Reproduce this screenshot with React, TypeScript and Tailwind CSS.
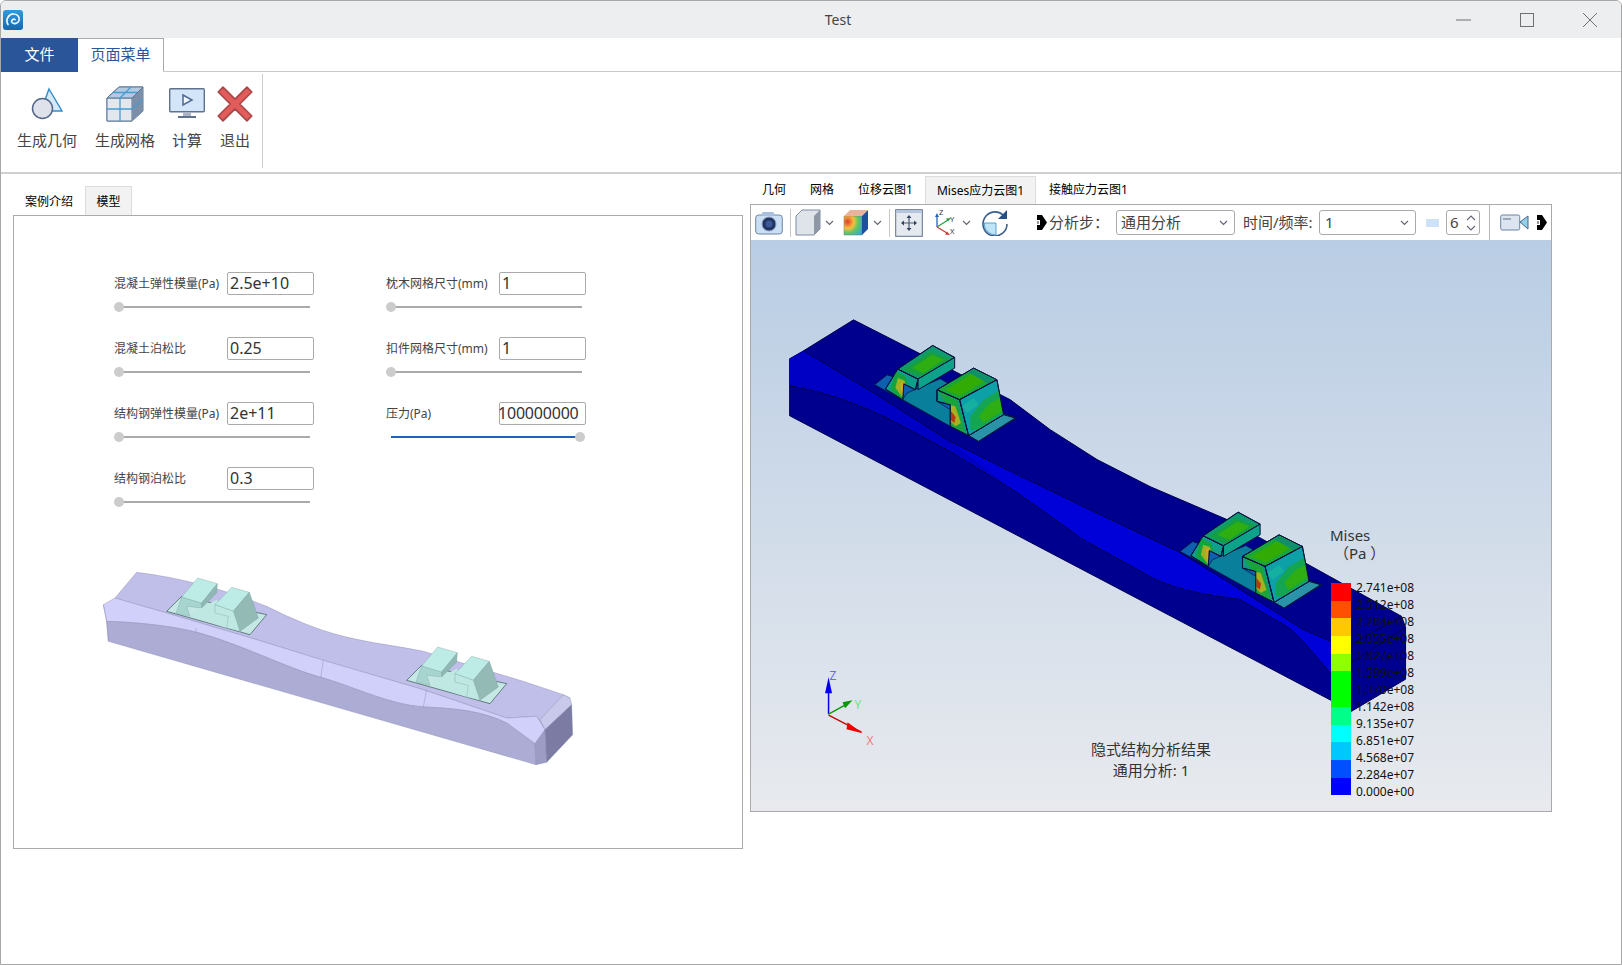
import React from "react";

const F = "font-['Noto_Sans','Noto_Sans_CJK_SC',sans-serif]";

function Logo() {
  return (
    <svg width="20" height="20" viewBox="0 0 20 20">
      <defs>
        <linearGradient id="lg" x1="0" y1="0" x2="0" y2="1">
          <stop offset="0" stopColor="#2f9be0" />
          <stop offset="1" stopColor="#1467ad" />
        </linearGradient>
      </defs>
      <rect width="20" height="20" rx="3" fill="url(#lg)" />
      <path d="M5 14.500c-3-5 1-11 6-10.500 4 .3 6 3.500 5 6.500-1 3-5 4-7 2-1.300-2 1-4 3-3" fill="none" stroke="#e8f6ff" strokeWidth="1.700" strokeLinecap="round" />
    </svg>
  );
}

function WinControls() {
  return (
    <div className="flex items-center">
      <svg width="16" height="16" viewBox="0 0 16 16" className="mr-[47px]"><path d="M0 8h15" stroke="#707070" strokeWidth="1" /></svg>
      <svg width="16" height="16" viewBox="0 0 16 16" className="mr-[47px]"><rect x="1.500" y="1.500" width="13" height="13" fill="none" stroke="#707070" /></svg>
      <svg width="16" height="16" viewBox="0 0 16 16"><path d="M1 1l14 14M15 1L1 15" stroke="#707070" strokeWidth="1" /></svg>
    </div>
  );
}

function GeoIcon() {
  return (
    <svg width="36" height="36" viewBox="0 0 36 36">
      <path d="M20 3L33 25H12z" fill="#d6e9f6" stroke="#2f8ccb" strokeWidth="1.400" />
      <circle cx="13.500" cy="22.500" r="10" fill="#dfe2ea" stroke="#56688a" strokeWidth="1.500" />
    </svg>
  );
}
function MeshIcon() {
  return (
    <svg width="38" height="38" viewBox="0 0 38 38">
      <path d="M1 13L13 2h24v24L26 36H1z" fill="#c9d8e6" stroke="#5b7696" strokeWidth="1" />
      <path d="M1 13h25v23H1z" fill="#e3e8ee" stroke="#5b7696" />
      <path d="M26 13L37 2v24L26 36z" fill="#7c8fa8" />
      <path d="M1 13L13 2h24L26 13z" fill="#b2cbe2" stroke="#5b7696" />
      <path d="M14 13v23M1 24h25M14 13L25 2M7 7.500h24M26 24L37 14" stroke="#4a9ad0" strokeWidth="1.300" fill="none" />
    </svg>
  );
}
function RunIcon() {
  return (
    <svg width="36" height="32" viewBox="0 0 36 32">
      <rect x="0.700" y="0.700" width="34.600" height="23" rx="1" fill="#d3e5f8" stroke="#60718e" strokeWidth="1.400" />
      <rect x="14" y="24" width="8" height="4" fill="#aab4c4" />
      <rect x="9" y="28" width="18" height="2" fill="#60718e" />
      <path d="M14 7l9 5-9 5z" fill="#eef5fc" stroke="#4d6a92" strokeWidth="1.500" />
    </svg>
  );
}
function ExitIcon() {
  return (
    <svg width="36" height="36" viewBox="3 3 30 30">
      <path d="M4 8L8 4l10 10L28 4l4 4-10 10 10 10-4 4-10-10L8 32l-4-4 10-10z" fill="#e25c5c" stroke="#a94848" strokeWidth="1.400" strokeLinejoin="round" />
    </svg>
  );
}

function RibbonButton({ icon, label, w }: { icon: React.ReactNode; label: string; w: string }) {
  return (
    <div className={`flex flex-col items-center shrink-0 ${w}`}>
      <div className="h-[44px] flex items-center justify-center">{icon}</div>
      <div className="text-[15px] leading-[20px] mt-[4px] text-[#444] whitespace-nowrap">{label}</div>
    </div>
  );
}

function Chevron({ cls = "" }: { cls?: string }) {
  return <svg width="9" height="6" viewBox="0 0 9 6" className={cls}><path d="M1 1l3.500 3.500L8 1" fill="none" stroke="#667" strokeWidth="1.200" /></svg>;
}
function Sep({ cls = "" }: { cls?: string }) {
  return <div className={`w-px h-[28px] bg-[#c8c8c8] shrink-0 ${cls}`} />;
}
function Broken({ id }: { id: string }) {
  return (
    <svg width="11" height="15" viewBox="0 0 11 15" className="shrink-0">
      <defs><filter id={id} x="-20%" y="-20%" width="140%" height="140%"><feGaussianBlur stdDeviation="0.700" /></filter></defs>
      <rect width="11" height="15" fill="#fff" />
      <g filter={`url(#${id})`}>
        <path d="M0 0h5l5 7.500-5 7.500H0V10h3V5H0z" fill="#000" />
        <path d="M0 6h2v3H0z" fill="#999" />
      </g>
    </svg>
  );
}

function Toolbar() {
  return (
    <div className="h-[35px] bg-white flex items-center text-[15px] text-[#444] shrink-0">
      <svg width="28" height="24" viewBox="0 0 28 24" className="ml-[4px] shrink-0">
        <rect x="0.700" y="4" width="26.600" height="19" rx="3" fill="#cbdff4" stroke="#6d84a5" />
        <rect x="7" y="1" width="12" height="4" rx="1" fill="#a9c1dc" />
        <circle cx="14" cy="13" r="7" fill="#22345f" stroke="#8aa2c0" />
        <circle cx="14" cy="13" r="3.500" fill="#3a5a9a" />
      </svg>
      <Sep cls="ml-[7px]" />
      <svg width="26" height="27" viewBox="0 0 26 27" className="ml-[4px] shrink-0">
        <path d="M1 7L7 1h18v19l-6 6H1z" fill="#dfe3ea" stroke="#7d8ca2" />
        <path d="M19 7l6-6v19l-6 6z" fill="#8e97a5" />
      </svg>
      <Chevron cls="ml-[4px] shrink-0" />
      <svg width="26" height="27" viewBox="0 0 26 27" className="ml-[9px] shrink-0">
        <defs>
          <radialGradient id="rb" cx="0.200" cy="0.300" r="1">
            <stop offset="0" stopColor="#e53b2c" />
            <stop offset="0.350" stopColor="#f6c03c" />
            <stop offset="0.600" stopColor="#5fc46c" />
            <stop offset="1" stopColor="#2ba7df" />
          </radialGradient>
        </defs>
        <path d="M1 7h18v19H1z" fill="url(#rb)" stroke="#777" strokeWidth="0.500" />
        <path d="M1 7L7 1h18L19 7z" fill="#e9b39c" />
        <path d="M19 7l6-6v19l-6 6z" fill="#1f4e9c" />
      </svg>
      <Chevron cls="ml-[4px] shrink-0" />
      <Sep cls="ml-[7px]" />
      <svg width="28" height="28" viewBox="0 0 28 28" className="ml-[5px] shrink-0">
        <rect x="0.700" y="0.700" width="26.600" height="26.600" fill="#e5e9f0" stroke="#5f6f8c" />
        <rect x="1" y="1" width="26" height="3" fill="#b4c6dc" />
        <path d="M14 8v12M8 14h12" stroke="#4c5a70" strokeWidth="1.200" />
        <path d="M14 6l-2.500 3h5zM14 22l-2.500-3h5zM6 14l3-2.500v5zM22 14l-3-2.500v5z" fill="#33435c" />
      </svg>
      <svg width="24" height="28" viewBox="0 0 24 28" className="ml-[11px] shrink-0">
        <path d="M3 18V7" stroke="#2a5fc4" strokeWidth="1.300" /><path d="M3 4l-2 4h4z" fill="#2a5fc4" />
        <path d="M3 18l11-7" stroke="#2f9b48" strokeWidth="1.300" /><path d="M17 9l-5 .500 2 3z" fill="#2f9b48" />
        <path d="M3 18l10 6" stroke="#d03a3a" strokeWidth="1.300" /><path d="M16 26l-5-.500 2-3z" fill="#d03a3a" />
        <text x="5" y="6" fontSize="7.500" fill="#334">Z</text>
        <text x="16" y="13" fontSize="7.500" fill="#334">Y</text>
        <text x="16" y="25" fontSize="7.500" fill="#334">X</text>
      </svg>
      <Chevron cls="ml-[4px] shrink-0" />
      <svg width="27" height="27" viewBox="0 0 27 27" className="ml-[11px] shrink-0">
        <path d="M21 6a12 12 0 1 0 4 9" fill="none" stroke="#3d5f8f" strokeWidth="1.600" />
        <path d="M25 1v9h-9z" fill="#274f87" />
        <path d="M2 14h12V26A12 12 0 0 1 2 14z" fill="#bfe4f6" stroke="#3b8fc0" strokeWidth="0.800" />
      </svg>
      <div className="ml-[28px] flex items-center shrink-0"><Broken id="b1" /><span className="ml-[1px] w-[67px] whitespace-nowrap">分析步：</span></div>
      <div className="h-[25px] w-[119px] border border-[#aaa] rounded-[3px] flex items-center justify-between px-[4px] pr-[6px] shrink-0">
        <span>通用分析</span><Chevron />
      </div>
      <span className="ml-[8px] w-[76px] whitespace-nowrap shrink-0">时间/频率:</span>
      <div className="h-[25px] w-[97px] border border-[#aaa] rounded-[3px] flex items-center justify-between px-[5px] pr-[6px] shrink-0">
        <span>1</span><Chevron />
      </div>
      <div className="w-[13px] h-[8px] ml-[10px] bg-[#cde2f9] shrink-0" />
      <div className="h-[25px] w-[34px] ml-[7px] border border-[#aaa] rounded-[3px] flex items-center justify-between pl-[3px] pr-[3px] shrink-0">
        <span>6</span>
        <div className="flex flex-col gap-[4px]">
          <svg width="10" height="6" viewBox="0 0 10 6"><path d="M1 5l4-4 4 4" fill="none" stroke="#667" strokeWidth="1.100" /></svg>
          <svg width="10" height="6" viewBox="0 0 10 6"><path d="M1 1l4 4 4-4" fill="none" stroke="#667" strokeWidth="1.100" /></svg>
        </div>
      </div>
      <div className="w-px h-[35px] bg-[#b8b8b8] ml-[9px] shrink-0" />
      <svg width="29" height="17" viewBox="0 0 29 17" className="ml-[10px] shrink-0">
        <rect x="0.700" y="1" width="19" height="15" rx="1.500" fill="#dbe4ef" stroke="#6d84a5" />
        <rect x="3" y="4" width="8" height="2" fill="#9aa8ba" />
        <path d="M20 8l8-6v13z" fill="#8ed0e6" stroke="#44648c" />
      </svg>
      <div className="ml-[8px] shrink-0"><Broken id="b2" /></div>
    </div>
  );
}

function ClipHeavy({ id }: { id: string }) {
  const left = "382,178 443,208 435,240 400,222 397,270 345,238";
  const topA = "382,178 487,107 553,143 443,208";
  const side = "500,240 568,270 595,378 540,350 540,285 500,275";
  const topB = "500,240 610,175 680,210 568,270";
  const front = "568,270 680,210 700,315 595,378";
  return (
    <g stroke="#05103c" strokeWidth="3" strokeLinejoin="round">
      <polygon points="312,225 350,195 740,325 625,395" fill="#0d5fb0" />
      <polygon points="625,395 595,378 700,315 735,325" fill="#2a93a8" />
      <polygon points="397,270 410,250 510,207 535,222 500,240 500,275 540,300 540,350" fill="#0a7f9c" strokeWidth="2" />
      <clipPath id={`${id}a`}><polygon points={left} /></clipPath>
      <polygon points={left} fill="#0f9f8a" />
      <g clipPath={`url(#${id}a)`} stroke="none">
        <polygon points="375,185 405,200 425,260 400,275 360,240" fill="#14a43c" />
        <polygon points="382,205 402,212 412,250 395,262 375,235" fill="#9db322" />
        <polygon points="390,218 400,218 400,255 392,245" fill="#d8a820" />
        <polygon points="402,224 434,241 402,258" fill="#b33b12" />
      </g>
      <polygon points={left} fill="none" />
      <clipPath id={`${id}b`}><polygon points={topA} /></clipPath>
      <polygon points={topA} fill="#0f9b70" />
      <g clipPath={`url(#${id}b)`} stroke="none">
        <polygon points="400,180 480,125 540,148 450,200" fill="#169f40" />
        <polygon points="425,175 485,135 520,150 460,190" fill="#2fae12" />
      </g>
      <polygon points={topA} fill="none" />
      <polygon points="443,208 553,143 553,175 443,240" fill="#0da38b" />
      <clipPath id={`${id}c`}><polygon points={side} /></clipPath>
      <polygon points={side} fill="#0f9b7f" />
      <g clipPath={`url(#${id}c)`} stroke="none">
        <polygon points="505,245 560,270 585,370 540,350 530,285" fill="#18a33c" />
        <polygon points="535,285 555,290 572,340 555,350 540,335" fill="#a8b022" />
        <polygon points="542,305 556,322 552,340 542,332" fill="#b33b12" />
      </g>
      <polygon points={side} fill="none" />
      <clipPath id={`${id}d`}><polygon points={topB} /></clipPath>
      <polygon points={topB} fill="#1aa53a" />
      <g clipPath={`url(#${id}d)`} stroke="none">
        <polygon points="525,240 610,190 650,210 570,258" fill="#33ab05" />
        <polygon points="600,175 680,210 660,225 590,185" fill="#0f8f6a" />
      </g>
      <polygon points={topB} fill="none" />
      <clipPath id={`${id}e`}><polygon points={front} /></clipPath>
      <polygon points={front} fill="#0ea0a8" />
      <g clipPath={`url(#${id}e)`} stroke="none">
        <polygon points="600,320 640,270 690,240 700,310 625,360 600,360" fill="#14a552" />
        <polygon points="625,320 660,280 690,265 695,305 640,340" fill="#2eae12" />
        <polygon points="575,290 610,265 625,285 590,310" fill="#15b0a0" />
      </g>
      <polygon points={front} fill="none" />
    </g>
  );
}

function HeavyBeam() {
  const upper = "L873,393 L950,442 L1017,475 L1083,507 L1180,553 L1237,588 L1303,630 L1331,642 L1352,645";
  return (
    <svg viewBox="751 240 800 572" className="absolute inset-0 w-full h-full">
      <path d="M789,359 L803,351 L853,320 L1010,400 L1050,430 L1097,460 L1150,487 L1227,520 L1402,617 L1406,628 L1406,680 L1352,712 L789,416 Z" fill="#00008f" stroke="#000050" strokeWidth="1" />
      <path d={`M789,359 L803,351 ${upper} L1352,663 L1331,674 C1310,650 1295,630 1280,623 L1240,600 C1200,595 1170,588 1150,577 L1083,540 L1017,493 L950,452 L890,420 C860,405 825,392 789,386 Z`} fill="#0000c4" />
      <path d="M950,442 L1017,475 L1083,507 L1180,553 L1237,588 L1303,630 L1331,642 L1331,674 C1310,650 1295,630 1280,623 L1240,600 C1200,595 1170,588 1150,577 L1083,540 L1017,493 Z" fill="#0000d8" />
      <path d={`M803,351 ${upper} M789,386 C825,392 860,405 890,420 L950,452 L1017,493 L1083,540 L1150,577 C1170,588 1200,595 1240,600 L1280,623 C1295,630 1310,650 1331,674 L1352,712`} fill="none" stroke="#000050" strokeWidth="1" />
      <path d="M1352,645 L1352,712 M1352,663 L1406,628 M1352,645 L1402,617" fill="none" stroke="#000050" strokeWidth="1" />
      <g transform="translate(770,310) scale(0.3333)"><ClipHeavy id="p1" /></g>
      <g transform="translate(1076,477) scale(0.3333)"><ClipHeavy id="p2" /></g>
      <g fontFamily="'Noto Sans',sans-serif">
        <path d="M828 715V690" stroke="#0000e6" strokeWidth="1.500" />
        <path d="M828 678l-3.500 16h7z" fill="#0000e6" />
        <path d="M828 715l20-11" stroke="#009a00" strokeWidth="1.300" />
        <path d="M852 701l-10 2 2.500 6z" fill="#009a00" />
        <path d="M828 716l33 17" stroke="#c80000" strokeWidth="1.300" />
        <path d="M862 734l-15-11-1 7z" fill="#f00000" />
        <text x="829" y="681" fontSize="12" fill="#6a6af5">Z</text>
        <text x="854" y="710" fontSize="12" fill="#6ce66c">Y</text>
        <text x="866" y="746" fontSize="12" fill="#f27c7c">X</text>
      </g>
    </svg>
  );
}

function Viewport() {
  const bands = ["#ff0000", "#ff5000", "#ffc800", "#ffff00", "#90ff00", "#00ff00", "#00ff00", "#00ff8a", "#00ffff", "#00c8ff", "#0050ff", "#0000ff"];
  const labels = ["2.741e+08", "2.512e+08", "2.284e+08", "2.055e+08", "1.827e+08", "1.599e+08", "1.370e+08", "1.142e+08", "9.135e+07", "6.851e+07", "4.568e+07", "2.284e+07", "0.000e+00"];
  return (
    <div className="relative flex-1 bg-gradient-to-b from-[#b9cde4] to-[#e8eaee] overflow-hidden">
      <HeavyBeam />
      <div className="absolute left-[580px] top-[343px] w-[20px] flex flex-col">
        {bands.map((c, i) => <div key={i} className="h-[17.700px]" style={{ background: c }} />)}
      </div>
      <div className="absolute left-[605px] top-[339px] flex flex-col text-[12px] leading-[17px] text-[#111]">
        {labels.map((l, i) => <div key={i}>{l}</div>)}
      </div>
      <div className="absolute left-[579px] top-[286px] text-[15px] leading-[18px] text-[#333] whitespace-pre">{"Mises\n （Pa ）"}</div>
      <div className="absolute left-[300px] top-[499px] w-[200px] text-center text-[15px] leading-[21px] text-[#333]">
        <div>隐式结构分析结果</div>
        <div>通用分析: 1</div>
      </div>
    </div>
  );
}

function Field({ label, value, max, over }: { label: string; value: string; max?: boolean; over?: boolean }) {
  return (
    <div className="h-[65px]">
      <div className="flex items-center h-[24px]">
        <span className="text-[12px] text-[#444] w-[113px] whitespace-nowrap pt-[2px]">{label}</span>
        <div className={`h-[23px] w-[87px] border border-[#aaa] rounded-[2px] text-[16px] leading-[21px] text-[#333] pl-[2px] whitespace-nowrap ${over ? "indent-[-4px] tracking-[-0.200px]" : ""}`}>{value}</div>
      </div>
      <div className="relative h-[2px] w-[191px] mt-[11px] ml-[5px]">
        <div className={`absolute inset-0 ${max ? "bg-[#1565c0]" : "bg-[#aaa]"}`} />
        <div className={`absolute top-[-4px] w-[10px] h-[10px] rounded-full bg-[#ccc] ${max ? "right-[-3px]" : "left-[-5px]"}`} />
      </div>
    </div>
  );
}

function LightClip() {
  return (
    <g stroke="#6f9a98" strokeWidth="1" strokeLinejoin="round">
      <polygon points="230,175 275,130 530,185 480,245" fill="#c5e8e4" stroke="#33504f" strokeWidth="2" />
      <polygon points="258,180 275,132 335,150 335,165 290,160 300,190" fill="#a8d4cf" />
      <polygon points="300,190 320,170 380,140 420,190 410,225" fill="#bfe8e2" strokeWidth="0" />
      <polygon points="275,132 323,75 382,92 335,150" fill="#bdebe6" />
      <polygon points="335,150 382,92 380,120 335,165" fill="#8fb8b4" />
      <polygon points="375,155 425,103 478,118 430,175" fill="#bdebe6" />
      <polygon points="430,175 478,118 505,195 450,235" fill="#94bab6" />
      <polygon points="375,155 430,175 450,235 410,225 415,190 375,180" fill="#bfe8e3" />
    </g>
  );
}

function LightBeam() {
  const lower = "C150,208 250,220 320,238 C450,272 600,350 700,375 C800,405 900,455 1000,462 C1100,466 1180,475 1250,510 L1335,572";
  return (
    <svg width="500" height="230" viewBox="0 0 1500 690" className="block mt-[22px] ml-[76px]">
      <g stroke="#8585ad" strokeWidth="1.200" strokeLinejoin="round">
        <path d="M75,135 L140,58 C300,78 430,120 530,160 C600,195 680,230 760,250 C850,272 930,280 1000,295 L1300,385 L1420,425 L1440,435 L1365,530 L1340,490 L1250,495 L1000,410 L700,322 L500,260 L230,180 Z" fill="#bfbfea" />
        <path d="M1420,425 L1440,435 L1445,455 L1365,530 L1350,500 Z" fill="#c9c9ec" />
        <path d={`M40,155 L75,135 L230,180 L500,260 L700,322 L1000,410 L1250,495 L1340,490 L1365,530 L1335,572 L1250,510 C1180,475 1100,466 1000,462 C900,455 800,405 700,375 C600,350 450,272 320,238 C250,220 150,208 50,205 Z`} fill="#d0d0fb" />
        <path d={`M50,205 ${lower} L1338,635 L55,265 Z`} fill="#acacd4" />
        <path d="M40,155 L50,205 L55,265" fill="none" />
        <path d="M1335,572 L1365,530 L1370,628 L1338,635 Z" fill="#9c9cc4" />
        <path d="M1365,530 L1445,455 L1448,545 L1370,628 Z" fill="#7b7ba3" />
        <path d="M700,322 L692,375 M1010,410 L1000,462 M318,225 L318,240" fill="none" />
      </g>
      <LightClip />
      <g transform="translate(720,207)"><LightClip /></g>
    </svg>
  );
}

export default function App() {
  return (
    <div className={`w-[1622px] h-[965px] bg-white border border-[#a8a8a8] rounded-t-[6px] overflow-hidden flex flex-col ${F}`}>
      <div className="h-[37px] shrink-0 bg-[#eceef0] relative flex items-center justify-between pl-[2px] pr-[23px]">
        <Logo />
        <span className="absolute left-[54px] right-0 text-center text-[14px] text-[#444] pointer-events-none">Test</span>
        <WinControls />
      </div>
      <div className="h-[34px] shrink-0 flex border-b border-[#c8c8c8]">
        <div className="w-[77px] h-[34px] pb-[2px] bg-[#2a5699] text-white text-[15px] flex items-center justify-center">文件</div>
        <div className="w-[86px] h-[34px] pb-[2px] bg-white border border-[#aaa] border-b-white border-l-0 text-[#2a5699] text-[15px] flex items-center justify-center">页面菜单</div>
      </div>
      <div className="h-[102px] shrink-0 border-b-2 border-[#d0d0d0] flex items-start">
        <div className="flex h-[96px] pt-[10px] pl-[12px] items-start">
          <RibbonButton icon={<GeoIcon />} label="生成几何" w="w-[68px]" />
          <RibbonButton icon={<MeshIcon />} label="生成网格" w="w-[68px] ml-[10px]" />
          <RibbonButton icon={<RunIcon />} label="计算" w="w-[36px] ml-[10px]" />
          <RibbonButton icon={<ExitIcon />} label="退出" w="w-[36px] ml-[12px]" />
        </div>
        <div className="w-px h-[94px] mt-[2px] bg-[#ccc] ml-[9px]" />
      </div>
      <div className="flex-1 flex items-start">
        <div className="w-[730px] ml-[12px] mt-[12px] shrink-0">
          <div className="flex h-[29px] text-[12px] text-black">
            <div className="w-[72px] flex items-center justify-center pt-[2px]">案例介绍</div>
            <div className="w-[47px] bg-[#f2f2f2] border border-[#dcdcdc] border-b-0 flex items-center justify-center pt-[2px]">模型</div>
          </div>
          <div className="h-[634px] border border-[#aaa] pt-[55px]">
            <div className="flex ml-[100px]">
              <div className="w-[272px]">
                <Field label="混凝土弹性模量(Pa)" value="2.5e+10" />
                <Field label="混凝土泊松比" value="0.25" />
                <Field label="结构钢弹性模量(Pa)" value="2e+11" />
                <Field label="结构钢泊松比" value="0.3" />
              </div>
              <div>
                <Field label="枕木网格尺寸(mm)" value="1" />
                <Field label="扣件网格尺寸(mm)" value="1" />
                <Field label="压力(Pa)" value="100000000" max over />
              </div>
            </div>
            <LightBeam />
          </div>
        </div>
        <div className="w-[802px] ml-[7px] mt-[2px] shrink-0">
          <div className="flex h-[28px] text-[12px] text-black items-stretch">
            <div className="w-[48px] flex items-center justify-center">几何</div>
            <div className="w-[48px] flex items-center justify-center">网格</div>
            <div className="w-[79px] flex items-center justify-center">位移云图1</div>
            <div className="w-[111px] bg-[#f2f2f2] border border-[#dcdcdc] border-b-0 flex items-center justify-center">Mises应力云图1</div>
            <div className="w-[105px] flex items-center justify-center">接触应力云图1</div>
          </div>
          <div className="h-[608px] border border-[#aaa] flex flex-col">
            <Toolbar />
            <Viewport />
          </div>
        </div>
      </div>
    </div>
  );
}
